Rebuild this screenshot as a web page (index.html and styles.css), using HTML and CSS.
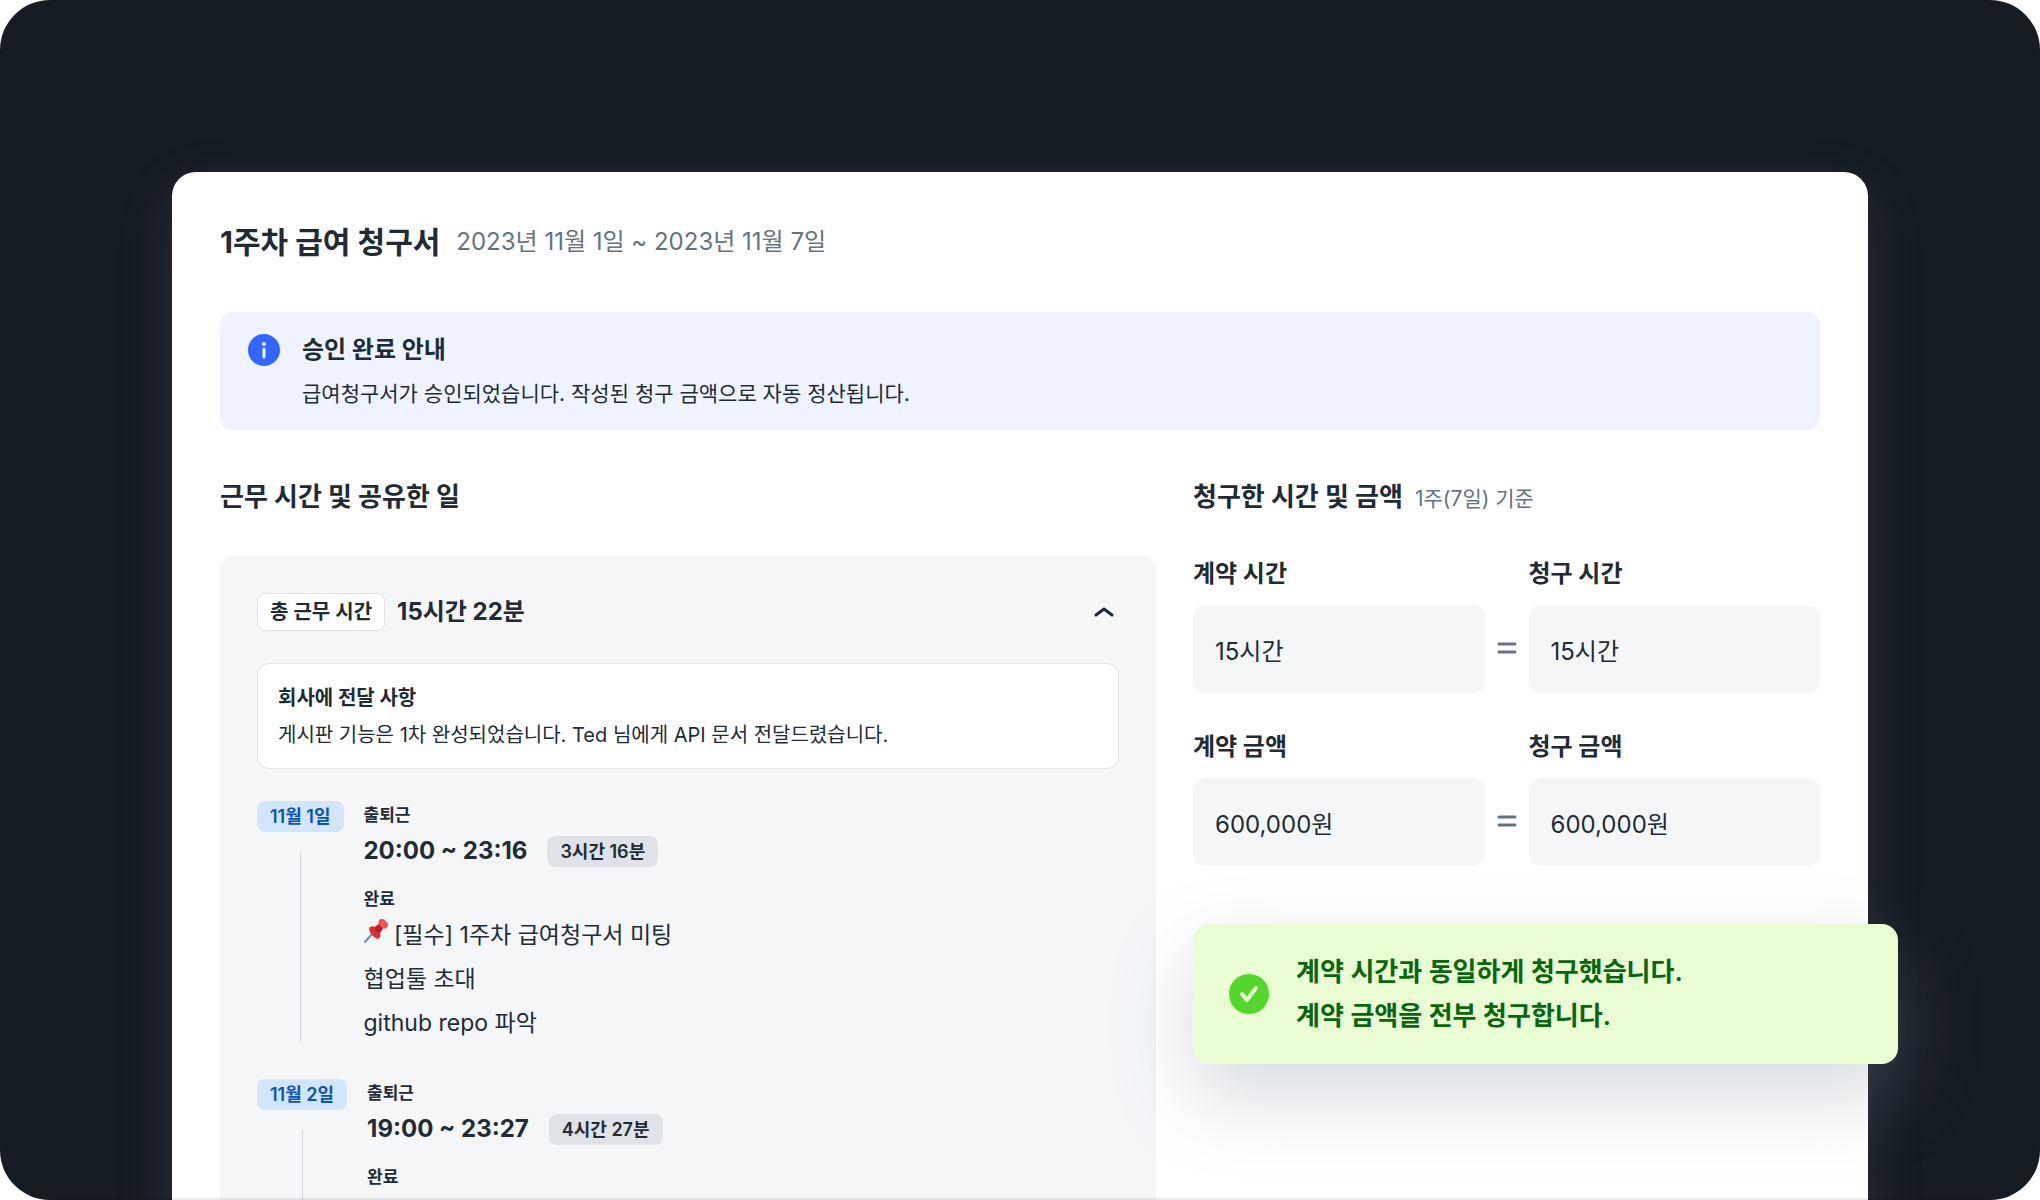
FILE: index.html
```html
<!DOCTYPE html>
<html lang="ko">
<head>
    <meta charset="UTF-8">
    <meta name="viewport" content="width=device-width, initial-scale=1.0">
    <title>1주차 급여 청구서</title>
    <link rel="stylesheet" href="styles.css">
</head>
<body>
    <div class="stage">
        <main class="invoice">
            <header class="invoice-header">
                <h1>1주차 급여 청구서</h1>
                <p class="period">2023년 11월 1일 ~ 2023년 11월 7일</p>
            </header>

            <section class="notice">
                <svg class="notice-icon" viewBox="0 0 32 32" aria-hidden="true">
                    <circle cx="16" cy="16" r="16" fill="#3366ff"/>
                    <circle cx="16" cy="10" r="2" fill="#eef3ff"/>
                    <path d="M16 15v8" stroke="#eef3ff" stroke-width="3" stroke-linecap="round"/>
                </svg>
                <div>
                    <h2>승인 완료 안내</h2>
                    <p>급여청구서가 승인되었습니다. 작성된 청구 금액으로 자동 정산됩니다.</p>
                </div>
            </section>

            <div class="columns">
                <section class="work">
                    <h2 class="section-title">근무 시간 및 공유한 일</h2>
                    <div class="work-panel">
                        <div class="total">
                            <span class="total-label">총 근무 시간</span>
                            <strong>15시간 22분</strong>
                            <button class="toggle" type="button" aria-label="접기">
                                <svg viewBox="0 0 24 24" aria-hidden="true">
                                    <path d="M4 15l8-6 8 6" fill="none" stroke="#212b36" stroke-width="3" stroke-linecap="round" stroke-linejoin="round"/>
                                </svg>
                            </button>
                        </div>

                        <div class="message">
                            <h3>회사에 전달 사항</h3>
                            <p>게시판 기능은 1차 완성되었습니다. Ted 님에게 API 문서 전달드렸습니다.</p>
                        </div>

                        <article class="day">
                            <div class="day-side">
                                <time class="badge date" datetime="2023-11-01">11월 1일</time>
                            </div>
                            <div class="day-body">
                                <h4>출퇴근</h4>
                                <div class="hours">
                                    <strong>20:00 ~ 23:16</strong>
                                    <span class="badge">3시간 16분</span>
                                </div>
                                <h4>완료</h4>
                                <ul class="tasks">
                                    <li>
                                        <svg class="pin" viewBox="0 0 24 24" aria-hidden="true">
                                            <path d="M1 23L9 14" stroke="#7b8ea3" stroke-width="2" stroke-linecap="round"/>
                                            <path d="M5 9c2-2 4-2 6-1l4-3c-1-2 0-4 2-5 3 0 6 3 7 6-1 3-3 4-5 3l-3 5c1 2 0 5-2 6-4-1-9-6-9-11z" fill="#dd2e34"/>
                                            <path d="M17 0c-2 1-3 3-2 5 1 2 2 3 4 4 2 1 4 0 5-3-1-3-4-6-7-6z" fill="#f0504f"/>
                                            <path d="M11 8c0 3 2 5 5 6l3-5c-2-1-3-2-4-4z" fill="#b81f2b"/>
                                        </svg>
                                        [필수] 1주차 급여청구서 미팅
                                    </li>
                                    <li>협업툴 초대</li>
                                    <li>github repo 파악</li>
                                </ul>
                            </div>
                        </article>

                        <article class="day">
                            <div class="day-side">
                                <time class="badge date" datetime="2023-11-02">11월 2일</time>
                            </div>
                            <div class="day-body">
                                <h4>출퇴근</h4>
                                <div class="hours">
                                    <strong>19:00 ~ 23:27</strong>
                                    <span class="badge">4시간 27분</span>
                                </div>
                                <h4>완료</h4>
                            </div>
                        </article>
                    </div>
                </section>

                <section class="claim">
                    <h2 class="section-title">청구한 시간 및 금액 <small>1주(7일) 기준</small></h2>

                    <div class="compare">
                        <div class="field">
                            <label for="contractTime">계약 시간</label>
                            <input type="text" id="contractTime" value="15시간" readonly>
                        </div>
                        <svg class="equals" viewBox="0 0 20 14" aria-hidden="true">
                            <path d="M2 3h16M2 11h16" stroke="#637381" stroke-width="3" stroke-linecap="round"/>
                        </svg>
                        <div class="field">
                            <label for="claimTime">청구 시간</label>
                            <input type="text" id="claimTime" value="15시간" readonly>
                        </div>
                    </div>

                    <div class="compare">
                        <div class="field">
                            <label for="contractPay">계약 금액</label>
                            <input type="text" id="contractPay" value="600,000원" readonly>
                        </div>
                        <svg class="equals" viewBox="0 0 20 14" aria-hidden="true">
                            <path d="M2 3h16M2 11h16" stroke="#637381" stroke-width="3" stroke-linecap="round"/>
                        </svg>
                        <div class="field">
                            <label for="claimPay">청구 금액</label>
                            <input type="text" id="claimPay" value="600,000원" readonly>
                        </div>
                    </div>

                    <div class="toast" role="status">
                        <svg class="toast-icon" viewBox="0 0 40 40" aria-hidden="true">
                            <circle cx="20" cy="20" r="20" fill="#54d62c"/>
                            <path d="M13 20l5 6 9-12" fill="none" stroke="#e9fcd4" stroke-width="4" stroke-linecap="round" stroke-linejoin="round"/>
                        </svg>
                        <p>계약 시간과 동일하게 청구했습니다.<br>계약 금액을 전부 청구합니다.</p>
                    </div>
                </section>
            </div>
        </main>
    </div>
</body>
</html>
```
FILE: styles.css
```css
* {
    box-sizing: border-box;
}
body {
    margin: 0;
    background-color: #ffffff;
    color: #212b36;
    font-family: Inter, 'Noto Sans CJK KR', sans-serif;
    font-size: 20px;
    line-height: 32px;
}
h1, h2, h3, h4, p, ul {
    margin: 0;
    padding: 0;
}
.stage {
    position: relative;
    height: 100vh;
    overflow: hidden;
    padding: 172px 172px 0;
    background-color: #161c24;
    border-radius: 50px;
}
/* thin shade along the bottom edge, over the card */
.stage::after {
    content: '';
    position: absolute;
    right: 0;
    bottom: 0;
    left: 0;
    height: 2px;
    background-color: rgba(0, 0, 0, 0.08);
}
.invoice {
    min-height: 100%;
    padding: 48px;
    background-color: #ffffff;
    border-radius: 24px;
    box-shadow: 0 20px 60px rgba(145, 158, 171, 0.14);
}
.invoice-header {
    display: flex;
    align-items: center;
    gap: 16px;
    margin-bottom: 48px;
    line-height: 44px;
}
h1 {
    font-size: 30px;
    font-weight: 700;
}
.period {
    color: #637381;
    font-size: 24px;
}
.notice {
    display: flex;
    gap: 22px;
    padding: 16px 28px 14px;
    margin-bottom: 48px;
    background-color: #eef3ff;
    border-radius: 12px;
}
.notice-icon {
    flex: none;
    width: 32px;
    height: 32px;
    margin-top: 6px;
}
.notice h2 {
    font-size: 24px;
    line-height: 44px;
}
.notice p {
    font-size: 21px;
    line-height: 44px;
}
.columns {
    display: grid;
    grid-template-columns: 58.5% 1fr;
    gap: 37px;
}
.section-title {
    margin-bottom: 40px;
    font-size: 26px;
    line-height: 38px;
}
.section-title small {
    margin-left: 6px;
    color: #637381;
    font-size: 21px;
    font-weight: 400;
}
.work-panel {
    padding: 37px;
    background-color: #f4f6f8;
    border-radius: 12px;
}
.total {
    display: flex;
    align-items: center;
    gap: 12px;
    margin-bottom: 32px;
    font-size: 24px;
}
.total-label {
    padding: 2px 12px;
    background-color: #ffffff;
    border: 1px solid #dfe3e8;
    border-radius: 8px;
    font-size: 20px;
    font-weight: 600;
}
.toggle {
    width: 30px;
    height: 30px;
    padding: 3px;
    margin-left: auto;
    background: none;
    border: none;
    cursor: pointer;
}
.toggle svg {
    display: block;
}
.message {
    padding: 16px 20px 14px;
    margin-bottom: 32px;
    background-color: #ffffff;
    border: 1px solid #dfe3e8;
    border-radius: 12px;
}
.message h3 {
    font-size: 20px;
    line-height: 36px;
}
.message p {
    line-height: 38px;
}
.day {
    display: flex;
    gap: 20px;
    min-height: 244px;
    margin-bottom: 34px;
}
.day-side {
    display: flex;
    flex-direction: column;
    align-items: center;
    gap: 20px;
}
.day-side::after {
    content: '';
    flex: 1;
    width: 1px;
    margin-bottom: 2px;
    background-color: #d0d6dc;
}
.badge {
    padding: 0 13px;
    background-color: #dfe3e8;
    border-radius: 8px;
    font-size: 18px;
    font-weight: 600;
    line-height: 31px;
}
.badge.date {
    background-color: #d1e6fa;
    color: #0c53b7;
}
.day h4 {
    font-size: 17px;
    line-height: 28px;
}
.hours {
    display: flex;
    align-items: center;
    gap: 20px;
    margin-bottom: 12px;
    font-size: 24px;
    line-height: 44px;
}
.tasks {
    list-style: none;
    font-size: 23px;
    line-height: 44px;
}
.pin {
    width: 24px;
    height: 24px;
}
.compare {
    display: grid;
    grid-template-columns: 1fr 20px 1fr;
    gap: 12px;
    margin-bottom: 38px;
}
.field label {
    display: block;
    margin-bottom: 15px;
    font-size: 24px;
    font-weight: 700;
    line-height: 32px;
}
.field input {
    display: block;
    width: 100%;
    height: 88px;
    padding: 0 22px;
    background-color: #f4f6f8;
    border: none;
    border-radius: 12px;
    color: #212b36;
    font-family: inherit;
    font-size: 24px;
}
.equals {
    align-self: end;
    width: 20px;
    height: 14px;
    margin-bottom: 38px;
}
.toast {
    display: flex;
    align-items: center;
    gap: 27px;
    padding: 26px 36px;
    margin-top: 58px;
    margin-right: -78px;
    background-color: #e9fcd4;
    border-radius: 16px;
    box-shadow: 0 32px 80px rgba(120, 132, 148, 0.3);
    color: #08660d;
    font-size: 26px;
    font-weight: 600;
    line-height: 44px;
}
.toast-icon {
    flex: none;
    width: 40px;
    height: 40px;
}
```
